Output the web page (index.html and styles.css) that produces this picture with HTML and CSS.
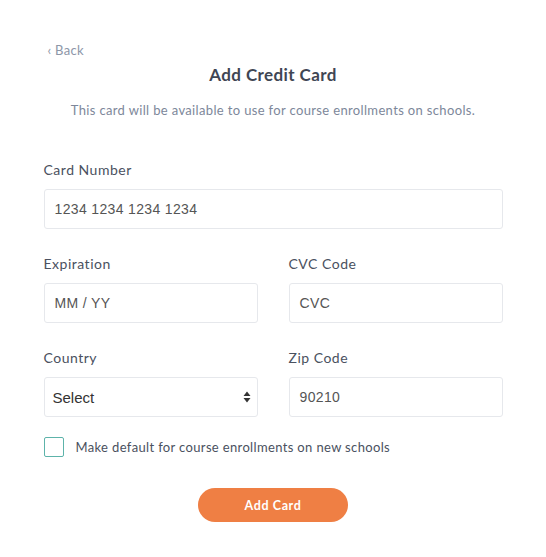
FILE: index.html
```html
<!DOCTYPE html>
<html>
<head>
<meta charset="utf-8">
<link rel="stylesheet" href="styles.css">
</head>
<body>
<div class="page">
  <a class="back">&lsaquo; Back</a>
  <h1 class="title">Add Credit Card</h1>
  <p class="subtitle">This card will be available to use for course enrollments on schools.</p>

  <div class="field">
    <div class="label">Card Number</div>
    <div class="input">1234 1234 1234 1234</div>
  </div>

  <div class="row">
    <div class="field">
      <div class="label">Expiration</div>
      <div class="input">MM / YY</div>
    </div>
    <div class="field">
      <div class="label">CVC Code</div>
      <div class="input">CVC</div>
    </div>
  </div>

  <div class="row">
    <div class="field">
      <div class="label">Country</div>
      <div class="input select"><span>Select</span>
        <svg class="arrows" width="8" height="12" viewBox="0 0 8 12"><path d="M4 0.5 L7.5 5 L0.5 5 Z M4 11.5 L7.5 7 L0.5 7 Z" fill="#333"/></svg>
      </div>
    </div>
    <div class="field">
      <div class="label">Zip Code</div>
      <div class="input">90210</div>
    </div>
  </div>

  <label class="check">
    <span class="box"></span>
    <span class="check-text">Make default for course enrollments on new schools</span>
  </label>

  <div class="actions">
    <button class="btn">Add Card</button>
  </div>
</div>
</body>
</html>
```
FILE: styles.css
```css
html, body {
  margin: 0;
  padding: 0;
  background: #fff;
}
body {
  font-family: "Lato", "Open Sans", sans-serif;
}
.page {
  width: 459px;
  margin: 0 auto;
  padding-top: 42px;
  display: flex;
  flex-direction: column;
}
.back {
  display: block;
  margin-left: 4px;
  font-size: 13px;
  line-height: 16px;
  color: #8d96a8;
  letter-spacing: 0.3px;
}
.title {
  margin: 7px 0 0;
  text-align: center;
  font-size: 17px;
  line-height: 20px;
  font-weight: 700;
  color: #3f4654;
  letter-spacing: 0.4px;
}
.subtitle {
  margin: 16px 0 0;
  text-align: center;
  font-size: 13px;
  line-height: 18px;
  color: #7d879a;
  letter-spacing: 0.35px;
}
.field {
  display: flex;
  flex-direction: column;
  margin-top: 43px;
}
.row {
  display: grid;
  grid-template-columns: 1fr 1fr;
  column-gap: 31px;
  margin-top: 27px;
}
.row .field {
  margin-top: 0;
}
.label {
  font-size: 14px;
  line-height: 16px;
  color: #4a5160;
  letter-spacing: 0.5px;
}
.input {
  margin-top: 11px;
  height: 40px;
  box-sizing: border-box;
  border: 1px solid #e6e8ec;
  border-radius: 3px;
  padding: 0 10px;
  display: flex;
  align-items: center;
  font-family: "Liberation Sans", Arial, sans-serif;
  font-size: 14px;
  color: #555;
  letter-spacing: 0.35px;
}
.select {
  justify-content: space-between;
  padding: 0 6px 0 8px;
  font-size: 15px;
  color: #333;
  letter-spacing: 0;
}
.arrows {
  display: block;
}
.check {
  display: flex;
  align-items: center;
  margin-top: 20px;
  gap: 12px;
}
.box {
  width: 20px;
  height: 20px;
  box-sizing: border-box;
  border: 1.5px solid #5db3aa;
  border-radius: 2px;
}
.check-text {
  font-size: 13px;
  line-height: 20px;
  color: #4a5160;
  letter-spacing: 0.35px;
}
.actions {
  display: flex;
  justify-content: center;
  margin-top: 31px;
}
.btn {
  width: 150px;
  height: 34px;
  border: none;
  border-radius: 17px;
  background: #ef7f44;
  color: #fff;
  font-family: "Lato", sans-serif;
  font-weight: 700;
  font-size: 12.5px;
  letter-spacing: 0.6px;
}
```
